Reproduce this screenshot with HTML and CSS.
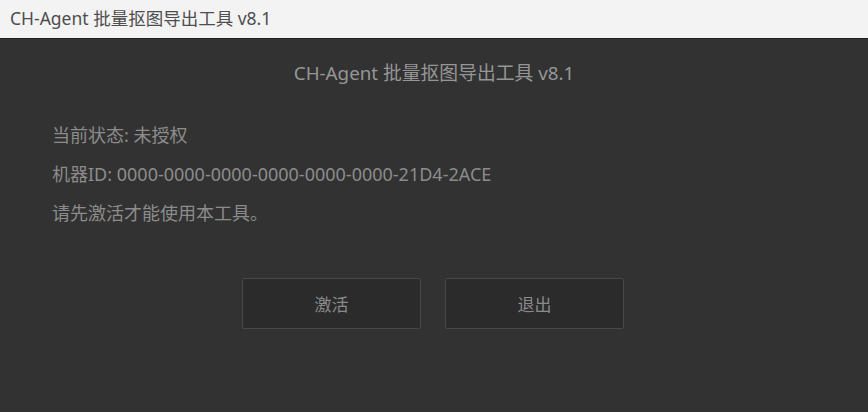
FILE: index.html
```html
<!DOCTYPE html>
<html lang="zh-CN">
<head>
<meta charset="utf-8">
<title>CH-Agent 批量抠图导出工具 v8.1</title>
<link rel="stylesheet" href="styles.css">
</head>
<body>
  <div class="titlebar">CH-Agent 批量抠图导出工具 v8.1</div>
  <main class="panel">
    <h1 class="heading">CH-Agent 批量抠图导出工具 v8.1</h1>
    <div class="info">
      <p class="line">当前状态: 未授权</p>
      <p class="line">机器ID: 0000-0000-0000-0000-0000-0000-21D4-2ACE</p>
      <p class="line">请先激活才能使用本工具。</p>
    </div>
    <div class="actions">
      <button class="btn" type="button">激活</button>
      <button class="btn" type="button">退出</button>
    </div>
  </main>
</body>
</html>
```
FILE: styles.css
```css
html, body {
  margin: 0;
  padding: 0;
  width: 868px;
  height: 412px;
  overflow: hidden;
  background: #323232;
  font-family: "Noto Sans", "Noto Sans CJK SC", sans-serif;
}

.titlebar {
  height: 39px;
  box-sizing: border-box;
  padding-left: 10px;
  line-height: 37px;
  font-size: 17.5px;
  color: #4e4e4e;
  background: #f3f3f3;
  border-bottom: 1px solid #1f1f1f;
}

.panel {
  display: flex;
  flex-direction: column;
  padding: 22px 0 0;
}

.heading {
  margin: 0;
  text-align: center;
  font-size: 18.8px;
  font-weight: normal;
  line-height: 24px;
  color: #969696;
}

.info {
  display: flex;
  flex-direction: column;
  gap: 15px;
  padding: 38px 0 0 52px;
}

.line {
  margin: 0;
  font-size: 18px;
  line-height: 24px;
  color: #8c8c8c;
}

.actions {
  display: flex;
  justify-content: center;
  gap: 24px;
  padding-top: 53px;
  padding-right: 2px;
}

.btn {
  width: 179px;
  height: 51px;
  box-sizing: border-box;
  background: #2b2b2b;
  border: 1px solid #484848;
  border-radius: 2px;
  color: #8a8a8a;
  font-family: "Noto Sans CJK SC", sans-serif;
  font-size: 17px;
}
```
